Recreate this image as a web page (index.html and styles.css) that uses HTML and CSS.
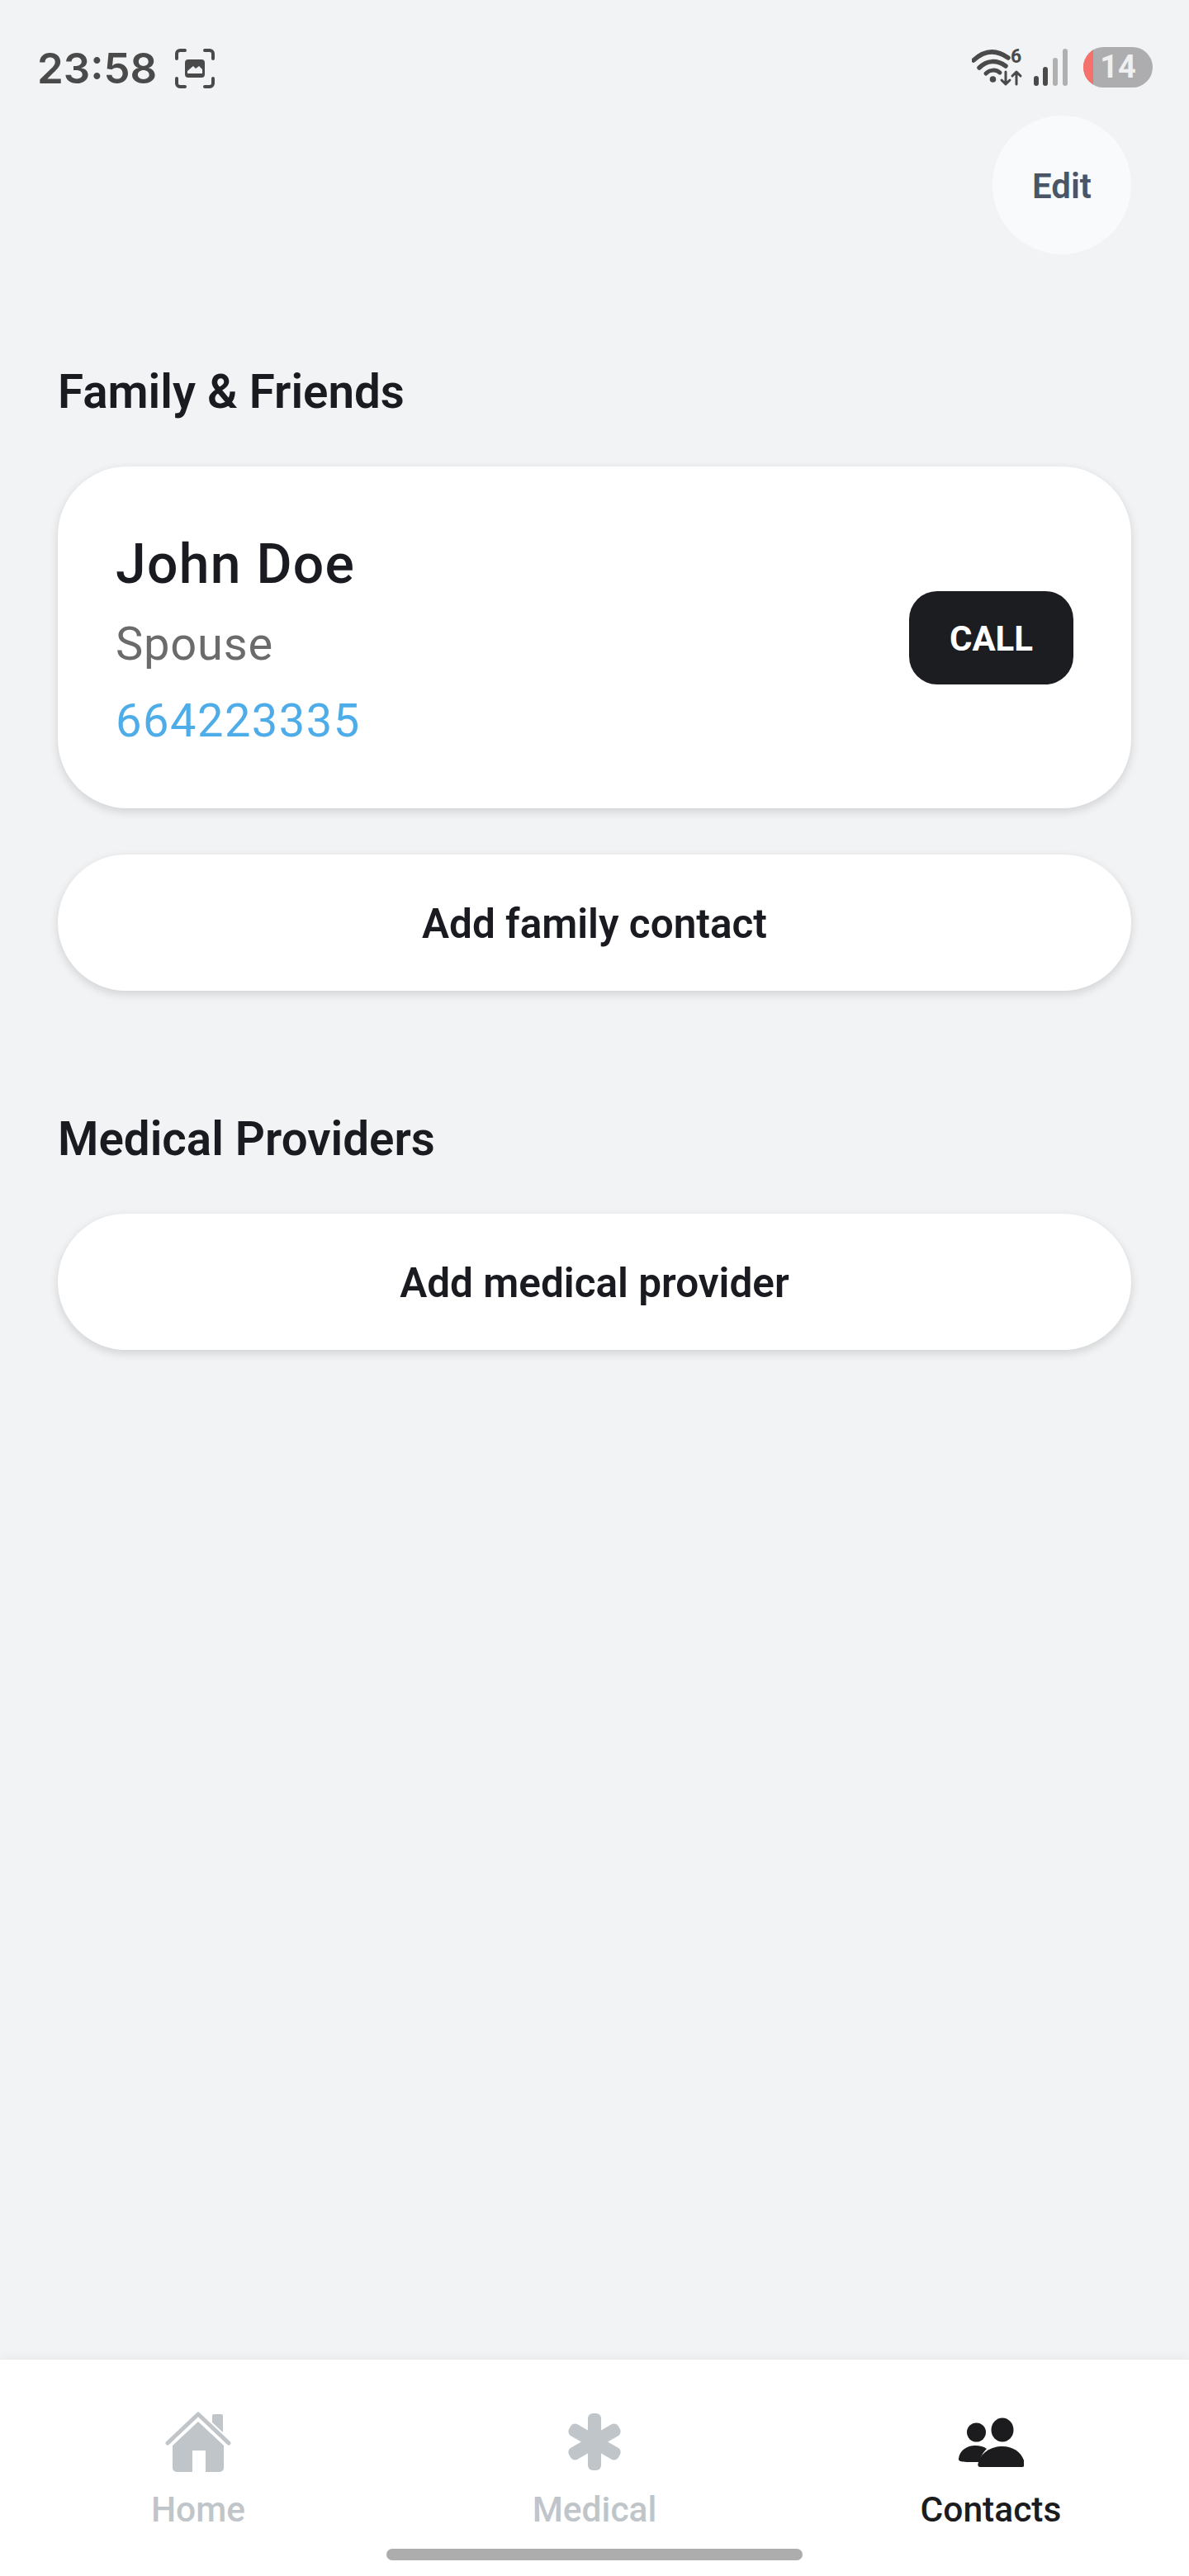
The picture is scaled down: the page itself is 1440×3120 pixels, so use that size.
FILE: index.html
```html
<!DOCTYPE html>
<html lang="en">
<head>
<meta charset="utf-8">
<title>Contacts</title>
<link rel="stylesheet" href="styles.css">
</head>
<body>
<div class="app">
  <header class="status">
    <div class="status-left">
      <span class="time">23:58</span>
      <svg class="shot" viewBox="0 0 48 48" fill="none">
        <path d="M2 12V6a4 4 0 0 1 4-4h6M36 2h6a4 4 0 0 1 4 4v6M46 36v6a4 4 0 0 1-4 4h-6M12 46H6a4 4 0 0 1-4-4v-6" stroke="#4a4a4a" stroke-width="4" stroke-linecap="round"/>
        <path fill-rule="evenodd" d="M16 13h16a4 4 0 0 1 4 4v14a4 4 0 0 1-4 4H16a4 4 0 0 1-4-4V17a4 4 0 0 1 4-4zm-1 17h18v-5l-4-4-4 3-3-3-7 6z" fill="#4a4a4a"/>
      </svg>
    </div>
    <div class="status-right">
      <svg class="wifi" viewBox="0 -8 64 62" fill="none">
        <path d="M2 14C16 1 30 1 44 11" stroke="#4a4a4a" stroke-width="5.500" stroke-linecap="round"/>
        <path d="M9 23C18 14 30 13 41 21" stroke="#4a4a4a" stroke-width="5.500" stroke-linecap="round"/>
        <path d="M17 30C22 25 29 25 34 29" stroke="#4a4a4a" stroke-width="5" stroke-linecap="round"/>
        <circle cx="25.500" cy="37" r="3.800" fill="#4a4a4a"/>
        <path d="M41 28v15M36 38l5 5 5-5M54 43V28M49 33l5-5 5 5" stroke="#4a4a4a" stroke-width="3" stroke-linecap="round" stroke-linejoin="round"/>
        <text x="47" y="17" class="wifi-six">6</text>
      </svg>
      <svg class="signal" viewBox="0 0 42 46">
        <rect x="0" y="33" width="6" height="12" rx="3" fill="#4a4a4a"/>
        <rect x="11" y="22" width="6" height="23" rx="3" fill="#4a4a4a"/>
        <rect x="23" y="11" width="6" height="34" rx="3" fill="#b0b0b0"/>
        <rect x="35" y="0" width="6" height="45" rx="3" fill="#b0b0b0"/>
      </svg>
      <div class="battery"><span class="battery-low"></span><span class="battery-num">14</span></div>
    </div>
  </header>

  <div class="toolbar"><button class="edit">Edit</button></div>

  <main class="content">
    <section class="family">
      <h2 class="heading">Family &amp; Friends</h2>
      <div class="card">
        <div class="card-info">
          <div class="name">John Doe</div>
          <div class="relation">Spouse</div>
          <div class="phone">664223335</div>
        </div>
        <button class="call">CALL</button>
      </div>
      <button class="add">Add family contact</button>
    </section>
    <section class="medical">
      <h2 class="heading">Medical Providers</h2>
      <button class="add">Add medical provider</button>
    </section>
  </main>

  <nav class="tabs">
    <div class="tab">
      <svg class="tab-icon" viewBox="0 0 80 74">
        <path d="M58 3h10a2 2 0 0 1 2 2v20L57 13V5a2 2 0 0 1 2-2z" fill="#c0c5c9"/>
        <path d="M3 38 40 3l37 35" fill="none" stroke="#c0c5c9" stroke-width="5" stroke-linecap="round" stroke-linejoin="round"/>
        <path d="M40 12 71 41v27a5 5 0 0 1-5 5H49V47H33v26H14a5 5 0 0 1-5-5V41z" fill="#c0c5c9"/>
      </svg>
      <span class="tab-label">Home</span>
    </div>
    <div class="tab">
      <svg class="tab-icon" viewBox="0 0 80 74">
        <g fill="#c0c5c9">
          <rect x="32" y="2" width="16" height="69" rx="6"/>
          <rect x="32" y="2" width="16" height="69" rx="6" transform="rotate(60 40 36.500)"/>
          <rect x="32" y="2" width="16" height="69" rx="6" transform="rotate(-60 40 36.500)"/>
        </g>
      </svg>
      <span class="tab-label">Medical</span>
    </div>
    <div class="tab tab-active">
      <svg class="tab-icon" viewBox="0 0 80 74">
        <ellipse cx="54" cy="22" rx="13.500" ry="14.500" fill="#1c1c1e"/>
        <circle cx="22.500" cy="25" r="11.500" fill="#1c1c1e"/>
        <path d="M27 61c-25 .5-26-1-26-4 1-10 10-16 20-16 6 0 10 1 14 4-4 4-8 9-8 16z" fill="#1c1c1e"/>
        <path d="M27 67c-2 0-3-1-2.500-4C27 50 40 42 54 42s24 8 27 20c.5 3-1 5-3 5z" fill="#1c1c1e"/>
      </svg>
      <span class="tab-label">Contacts</span>
    </div>
    <div class="home-bar"></div>
  </nav>
</div>
</body>
</html>
```
FILE: styles.css
```css
* { box-sizing: border-box; }
html, body { margin: 0; padding: 0; }
body { background: #f2f3f5; font-family: Roboto, "Noto Sans", sans-serif; color: #1a1b20; }
button { font-family: inherit; border: 0; padding: 0; cursor: pointer; }

.app { width: 1440px; height: 3120px; display: flex; flex-direction: column; }

.status { height: 140px; padding: 0 44px 0 45px; display: flex; justify-content: space-between; align-items: flex-start; flex: none; }
.status-left { display: flex; align-items: center; gap: 22px; margin-top: 59px; height: 47px; }
.time { font-family: Inter, Roboto, sans-serif; font-size: 51px; font-weight: 600; color: #4a4a4a; line-height: 47px; }
.shot { width: 48px; height: 48px; }
.status-right { display: flex; align-items: center; margin-top: 57px; height: 49px; }
.wifi { width: 64px; height: 62px; margin-right: 11px; }
.wifi-six { font-family: Roboto, sans-serif; font-weight: 700; font-size: 23px; fill: #4a4a4a; }
.signal { width: 42px; height: 46px; margin-right: 18px; }
.battery { width: 84px; height: 49px; border-radius: 25px; background: #adadaf; overflow: hidden; display: flex; align-items: center; }
.battery-low { width: 12px; height: 100%; background: #f6706c; flex: none; }
.battery-num { flex: 1; text-align: center; font-size: 38px; font-weight: 700; color: #f0f0f0; line-height: 49px; padding-right: 12px; }

.toolbar { display: flex; justify-content: flex-end; padding-right: 70px; flex: none; }
.edit { width: 168px; height: 168px; border-radius: 50%; background: #f8fafc; color: #4b5563; font-size: 42px; font-weight: 600; padding-top: 2px; }

.content { flex: 1; padding: 0 70px; }
.heading { margin: 0; font-size: 56.500px; font-weight: 600; line-height: 64px; color: #1a1b20; }
.family { padding-top: 135px; }
.family .heading { margin-bottom: 58px; }
.medical { padding-top: 148px; }
.medical .heading { margin-bottom: 58px; }

.card { height: 414px; border-radius: 84px; background: #fff; box-shadow: 0 4px 12px rgba(0, 0, 0, 0.14); padding: 0 70px; display: flex; justify-content: space-between; align-items: center; margin-bottom: 56px; }
.card-info { display: flex; flex-direction: column; margin-top: 3px; }
.name { font-size: 66px; font-weight: 500; line-height: 80px; color: #1a1b20; letter-spacing: 1.300px; }
.relation { font-size: 56px; line-height: 62px; color: #6b6b6b; margin-top: 25px; letter-spacing: 0.800px; }
.phone { font-size: 56px; line-height: 62px; color: #4eade8; margin-top: 31px; letter-spacing: 1.500px; }
.call { width: 199px; height: 113px; border-radius: 34px; background: #1c1d21; color: #fff; font-size: 42px; font-weight: 700; padding-top: 2px; }

.add { display: block; width: 100%; height: 165px; border-radius: 83px; background: #fff; box-shadow: 0 4px 12px rgba(0, 0, 0, 0.14); color: #1a1b20; font-size: 49.500px; font-weight: 600; padding-top: 2px; }

.tabs { position: relative; height: 262px; flex: none; background: #fff; box-shadow: 0 -2px 12px rgba(0, 0, 0, 0.05); display: grid; grid-template-columns: repeat(3, 480px); }
.tab { display: flex; flex-direction: column; align-items: center; padding-top: 63px; color: #c0c5c9; }
.tab-active { color: #1c1c1e; }
.tab-icon { width: 80px; height: 74px; display: block; }
.tab-label { margin-top: 20px; font-size: 42.500px; font-weight: 500; line-height: 50px; }
.home-bar { position: absolute; left: 468px; top: 229px; width: 504px; height: 14px; border-radius: 7px; background: #adadad; }
```
